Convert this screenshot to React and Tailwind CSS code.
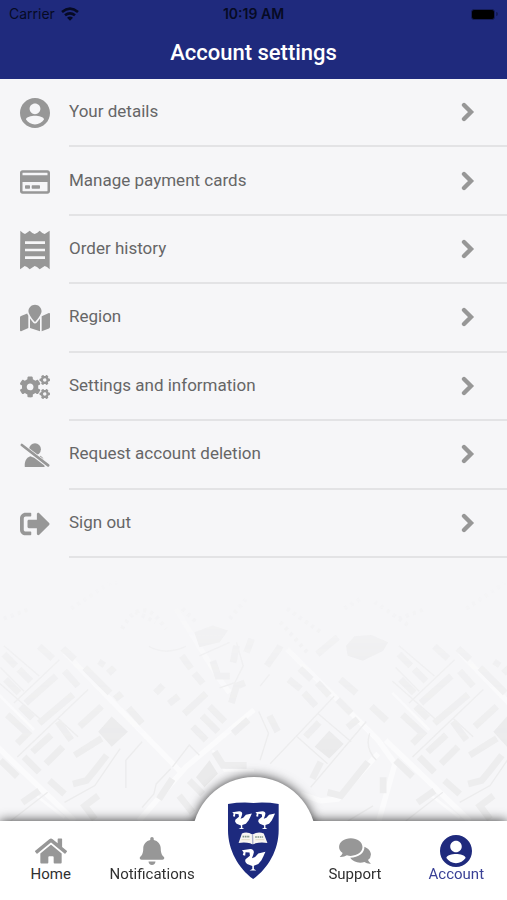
import React, { useState } from "react";
import {
  FaBell,
  FaCogs,
  FaHome,
  FaMapMarked,
  FaRegCreditCard,
  FaSignOutAlt,
} from "react-icons/fa";

const AccountIcon = ({ className }) => (
  <svg viewBox="2 2 20 20" fill="currentColor" className={className} aria-hidden="true">
    <path d="M12 2C6.48 2 2 6.48 2 12s4.48 10 10 10 10-4.48 10-10S17.52 2 12 2zm0 3.600c2 0 3.600 1.600 3.600 3.600S14 12.800 12 12.800 8.400 11.200 8.400 9.200 10 5.600 12 5.600zm0 14c-2.500 0-4.710-1.280-6-3.220.03-1.700 3.500-2.500 6-2.500s5.970.8 6 2.500c-1.290 1.940-3.500 3.220-6 3.220z" />
  </svg>
);

const ReceiptIcon = ({ className }) => (
  <svg viewBox="0 0 90 120" className={className} aria-hidden="true">
    <path
      fill="currentColor"
      d="M1 2l8 7 6 3 8-5 6-5 8 7 7 3 8-4 7-6 8 7 7 3 8-5 7-5v116l-8-7-7-3-8 5-7 5-8-7-7-3-8 5-7 5-8-7-7-3-7 5-7 5z"
    />
    <path stroke="#f6f6f8" strokeWidth="8" d="M15 38h60M15 60h60M15 83h60" />
  </svg>
);

const UserSlashIcon = ({ className }) => (
  <svg viewBox="0 0 90 76" className={className} aria-hidden="true">
    <g fill="currentColor">
      <circle cx="45" cy="19" r="18" />
      <path d="M14 73c-1-17 3-28 17-33 10 6 20 5 30-1 10 5 14 16 13 34z" />
    </g>
    <path stroke="#f6f6f8" strokeWidth="14" d="M-4 1l98 74" />
    <path stroke="currentColor" strokeWidth="8" strokeLinecap="round" d="M5 6l80 62" />
  </svg>
);

const ChevronIcon = ({ className }) => (
  <svg viewBox="0 0 42 60" className={className} aria-hidden="true">
    <path
      fill="none"
      stroke="currentColor"
      strokeWidth="13"
      strokeLinecap="round"
      d="M9 9l21 21L9 51"
    />
  </svg>
);

const ChatIcon = ({ className }) => (
  <svg viewBox="0 0 100 80" fill="currentColor" className={className} aria-hidden="true">
    <path d="M37 1c20 0 36 12 36 27S57 55 37 55q-6 0-12-2-9 6-22 5 7-6 9-12Q1 39 1 28C1 13 17 1 37 1z" />
    <path d="M79 27c12 5 20 14 20 24q0 10-9 17 2 6 9 11-12 1-20-5-6 2-13 2c-13 0-25-6-31-15 26-1 45-15 44-34z" />
  </svg>
);

const WifiIcon = () => (
  <svg viewBox="0 0 54 42" fill="none" stroke="#060a24" strokeWidth="8" className="h-[14px] w-[18px]" aria-hidden="true">
    <path d="M3 15q24-20 48 0M12 25q15-12 30 0" />
    <path fill="#060a24" stroke="none" d="M27 41l-9-9q9-7 18 0z" />
  </svg>
);

const MENU_ITEMS = [
  { label: "Your details", icon: <AccountIcon className="size-[30px]" /> },
  { label: "Manage payment cards", icon: <FaRegCreditCard className="size-[30px]" /> },
  { label: "Order history", icon: <ReceiptIcon className="h-10 w-[30px]" /> },
  { label: "Region", icon: <FaMapMarked className="size-[30px]" /> },
  { label: "Settings and information", icon: <FaCogs className="size-[30px]" /> },
  { label: "Request account deletion", icon: <UserSlashIcon className="h-[25px] w-[30px]" /> },
  { label: "Sign out", icon: <FaSignOutAlt className="size-[30px]" /> },
];

const TABS = [
  { label: "Home", icon: <FaHome className="size-8" /> },
  { label: "Notifications", icon: <FaBell className="size-7" /> },
  { label: "University" },
  { label: "Support", icon: <ChatIcon className="h-[26px] w-[34px]" /> },
  { label: "Account", icon: <AccountIcon className="size-8" /> },
];

// One tile of the faded street map, repeated across the width
const StreetMap = () => (
  <svg
    viewBox="0 0 1521 780"
    preserveAspectRatio="xMidYMax slice"
    className="min-h-0 w-full flex-1"
    aria-hidden="true"
  >
    <defs>
      <linearGradient id="fade" x1="0" y1="0" x2="0" y2="1">
        <stop offset="0.08" stopColor="#fff" stopOpacity="0" />
        <stop offset="0.4" stopColor="#fff" stopOpacity="0.6" />
        <stop offset="0.75" stopColor="#fff" stopOpacity="1" />
      </linearGradient>
      <mask id="fadeMask">
        <rect width="1521" height="780" fill="url(#fade)" />
      </mask>
      <g id="tile" fill="none">
        <g stroke="#fbfbfc" strokeWidth="16">
          <path d="M-20 540L230 780M200 280L550 640M420 780L560 620L762 450M530 150L660 360L690 400" />
          <path d="M860 270L1130 540L1180 610L1132 780M900 700L960 720L1010 715L1130 580" />
          <path strokeWidth="8" d="M0 400L110 510M200 770L110 700M640 570L675 630H762" />
        </g>
        <g stroke="#ececed" strokeWidth="4">
          <path d="M20 260L125 350M10 325L80 395M0 365L130 480M50 430L185 302M60 590L270 390" />
          <path d="M180 475L240 530M200 725L290 675L365 565M430 545L382 600V682M430 740L465 700L472 670L515 625M520 620L570 555L600 585" />
          <path d="M450 262Q500 290 560 262M600 290L690 250M710 250L730 320L705 370L660 385M40 780L150 695" />
          <path d="M776 455L805 520L780 600M810 610L1000 410M890 530L980 610M950 460L1050 545M930 680L1095 485M1105 520Q1090 565 1125 600M780 380L808 345M1040 780L1115 735" />
        </g>
        <g stroke="#ededee" strokeWidth="20">
          <path d="M20 285L55 320M65 330L100 365M25 360L65 400M125 262L165 298M195 268L230 300M200 335L240 380" />
          <path d="M85 430L175 350M125 490L225 405M70 440L105 475M30 465L90 520L60 550M105 575L160 525M145 610L195 560M180 485L220 540" />
          <path d="M245 500L310 440M260 325L335 400M305 320L315 305M330 342L348 325M350 418L370 402M390 445L430 490" />
          <path d="M80 590L125 635M10 600L60 648M155 660L200 700M75 725L125 690M225 670L265 660L290 630L325 585M230 585L310 535M300 705L260 735L290 775" />
          <path d="M470 400L492 378M510 432L538 410M555 462L620 402M548 290L575 328M585 342L610 372M580 500L620 540M608 468L655 515M630 440L675 485" />
          <path d="M480 715L520 655M540 705L580 755M570 660L610 700M645 575L670 615H740M700 520L745 480M640 305L655 350L690 350M710 260L700 310M695 430L710 380L735 370M740 280L755 240" />
          <path d="M800 320L835 270L840 260M865 360L900 388M898 328L932 360M910 400L945 438M950 370L985 408M1018 360L1065 400M1010 420L1050 460M1110 440L1155 482" />
          <path d="M808 468L832 515M915 530L955 488M1040 502L1070 478M935 655L960 605M980 695L1020 705L1100 605M1145 650V698M950 285L1010 235" />
        </g>
        <g fill="#eaeaeb">
          <path d="M300 515L340 470L388 515L340 560zM590 650L630 600L655 640L615 680zM942 560L985 512L1028 552L985 595z" />
          <path d="M585 220L640 200L685 215L660 250L600 265zM1035 260L1060 232L1110 228L1160 250L1145 275L1085 305L1040 290z" />
        </g>
        <g stroke="#eeeeef" strokeWidth="12" strokeDasharray="9 13">
          <path d="M220 150L340 70L365 80M370 210Q430 100 500 210M410 160L470 190M840 190L920 280M860 150L960 220M1120 130L1220 200M1030 150L1080 120M20 180L100 150M550 150L590 190M690 180L740 120" />
        </g>
      </g>
    </defs>
    <g mask="url(#fadeMask)">
      <use href="#tile" />
      <use href="#tile" x="1172" />
    </g>
  </svg>
);

const Crest = () => (
  <svg viewBox="140 96 160 234" className="h-[78px] w-[53px]" aria-hidden="true">
    <defs>
      <path
        id="bird"
        fill="#fff"
        d="M1 4L22 1Q31 2 31 9Q30 15 26 24L34 21L42 12L60 8L55 19L50 29L42 39L31 43V51L37 55L20 55L27 51V44L14 39Q7 33 10 27L21 18L20 10L10 9L9 18L3 16L5 9z"
      />
    </defs>
    <path
      fill="#1d2a7e"
      d="M143 101Q181 95 220 98 258 95 296 101V180C296 240 265 295 219 328 174 295 143 240 143 180z"
    />
    <use href="#bird" x="155" y="122" />
    <use href="#bird" x="225" y="122" />
    <g transform="translate(184 236) scale(1.2)">
      <use href="#bird" />
    </g>
    <path
      fill="#f7f5f1"
      d="M175 219l10-29q15-7 32 3 17-10 34-3l11 29q-20-3-36 1-8 6-16 0-16-4-35-1z"
    />
    <path stroke="#a9aeca" strokeWidth="4" d="M217 194l1 28" />
    <path stroke="#7f9487" strokeWidth="5" strokeDasharray="5 2" d="M187 200h22M225 201h24" />
    <path stroke="#d9d3ae" strokeWidth="2" d="M184 209h25M226 209h26" />
  </svg>
);

const App = () => {
  const [activeTab, setActiveTab] = useState("Account");

  return (
    <div className="flex min-h-screen flex-col overflow-hidden bg-[#f6f6f8] font-[Roboto,sans-serif]">
      <header className="bg-[#1f2a7d] pb-3">
        <div className="grid grid-cols-3 items-center px-[9px] pt-1 font-[Inter,sans-serif] text-sm leading-5 text-[#060a24]">
          <div className="flex items-center gap-[6px]">
            Carrier
            <WifiIcon />
          </div>
          <div className="text-center font-semibold">10:19 AM</div>
          <div className="flex items-center justify-end">
            <div className="h-[11px] w-6 rounded-[3px] border border-[#151d59] bg-black" />
            <div className="ml-px h-1 w-[2px] rounded-r bg-[#151d59]" />
          </div>
        </div>
        <h1 className="pt-[14px] text-center text-[22px] leading-[29px] font-medium text-white">
          Account settings
        </h1>
      </header>

      <main className="flex flex-1 flex-col">
        <ul className="grid min-h-[479px] auto-rows-fr">
          {MENU_ITEMS.map(({ label, icon }) => (
            <li key={label} className="flex">
              <button type="button" className="flex flex-1 cursor-pointer items-stretch pl-5 text-left">
                <span className="flex w-[49px] items-center text-[#979797]">{icon}</span>
                <span className="flex flex-1 items-center justify-between border-b-2 border-[#e3e3e5] pr-8">
                  <span className="pb-[2px] text-[17px] leading-6 text-[#666667]">{label}</span>
                  <ChevronIcon className="h-5 w-[14px] text-[#979797]" />
                </span>
              </button>
            </li>
          ))}
        </ul>
        <StreetMap />
      </main>

      <nav className="relative h-[79px] bg-white drop-shadow-[0_0_6px_rgba(0,0,0,0.8)]">
        <div className="absolute -top-[44px] left-1/2 size-[124px] -translate-x-1/2 rounded-full bg-white" />
        <ul className="relative grid h-full grid-cols-5 bg-white">
          {TABS.map(({ label, icon }) => (
            <li key={label} className="flex justify-center">
              <a
                href="#"
                aria-label={label}
                aria-current={activeTab === label ? "page" : undefined}
                onClick={() => setActiveTab(label)}
                className={
                  activeTab === label
                    ? "flex flex-col items-center text-[#1f2a7d]"
                    : "flex flex-col items-center text-[#979797]"
                }
              >
                {icon ? (
                  <>
                    <span className="mt-[14px] flex h-8 items-center">{icon}</span>
                    <span
                      className={
                        activeTab === label
                          ? "text-[15px] leading-[14px] text-[#3a4196]"
                          : "text-[15px] leading-[14px] text-[#303030]"
                      }
                    >
                      {label}
                    </span>
                  </>
                ) : (
                  <span className="-mt-[19px]">
                    <Crest />
                  </span>
                )}
              </a>
            </li>
          ))}
        </ul>
      </nav>
    </div>
  );
};

export default App;
